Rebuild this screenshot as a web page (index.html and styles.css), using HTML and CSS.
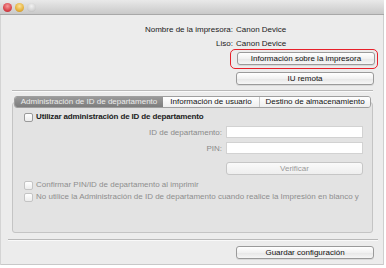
FILE: index.html
```html
<!DOCTYPE html>
<html lang="es">
<head>
  <meta charset="UTF-8">
  <title>Canon Device</title>
  <link rel="stylesheet" href="styles.css">
</head>
<body>
  <div class="window">
    <div class="titlebar">
      <span class="light light-red"></span>
      <span class="light light-yellow"></span>
      <span class="light light-gray"></span>
    </div>

    <div class="content">
      <div class="info">
        <span class="info-label">Nombre de la impresora:</span>
        <span class="info-value">Canon Device</span>
        <span class="info-label">Liso:</span>
        <span class="info-value">Canon Device</span>
      </div>

      <div class="top-buttons">
        <div class="highlight">
          <button class="btn">Información sobre la impresora</button>
        </div>
        <button class="btn btn-remote">IU remota</button>
      </div>

      <div class="separator"></div>

      <div class="tabbox">
        <div class="tabs">
          <span class="tab tab-active">Administración de ID de departamento</span>
          <span class="tab tab-mid">Información de usuario</span>
          <span class="tab tab-last">Destino de almacenamiento</span>
        </div>
        <div class="panel">
          <label class="check check-main"><span class="box"></span>Utilizar administración de ID de departamento</label>

          <div class="fields">
            <span class="field-label">ID de departamento:</span>
            <span class="input"></span>
            <span class="field-label">PIN:</span>
            <span class="input"></span>
            <span></span>
            <button class="btn btn-disabled">Verificar</button>
          </div>

          <label class="check check-off"><span class="box"></span>Confirmar PIN/ID de departamento al imprimir</label>
          <label class="check check-off"><span class="box"></span>No utilice la Administración de ID de departamento cuando realice la Impresión en blanco y</label>
        </div>
      </div>

      <div class="separator separator-bottom"></div>

      <div class="footer">
        <button class="btn">Guardar configuración</button>
      </div>
    </div>
  </div>
</body>
</html>
```

FILE: styles.css
```css
body {
  margin: 0;
  background: #fff;
  font-family: "Liberation Sans", Arial, sans-serif;
  font-size: 8px;
  color: #1a1a1a;
}

.window {
  width: 384px;
  height: 265px;
  background: #ececec;
  box-shadow: inset 1px 0 0 #d4d4d4, inset -1px 0 0 #cfcfcf, inset 0 -1px 0 #c8c8c8;
}

.titlebar {
  height: 14px;
  display: flex;
  align-items: center;
  gap: 3px;
  padding-left: 3px;
  background: linear-gradient(#e9e9e9, #c9c9c9);
  border-bottom: 1px solid #a8a8a8;
}

.light {
  width: 9px;
  height: 9px;
  border-radius: 50%;
}

.light-red {
  background: radial-gradient(circle at 50% 35%, #f59a9a, #d8434a 60%, #a92a30);
}

.light-yellow {
  background: radial-gradient(circle at 50% 35%, #fbe39a, #e5b03a 60%, #b9862a);
}

.light-gray {
  background: radial-gradient(circle at 50% 35%, #f2f2f2, #d2d2d2 60%, #adadad);
}

.content {
  padding: 8px 0 0 0;
}

.info {
  display: grid;
  grid-template-columns: 233px 1fr;
  column-gap: 3px;
  line-height: 14px;
}

.info-label {
  text-align: right;
}

.btn {
  display: block;
  height: 13px;
  padding: 0;
  font-family: inherit;
  font-size: 8px;
  color: #111;
  white-space: nowrap;
  border: 1px solid #9a9a9a;
  border-radius: 3px;
  background: linear-gradient(#ffffff, #f1f1f1 50%, #e6e6e6 51%, #f6f6f6);
  box-shadow: 0 1px 0 rgba(0, 0, 0, 0.08);
}

.top-buttons {
  display: flex;
  flex-direction: column;
  align-items: flex-end;
  padding-right: 10px;
  margin-top: -2px;
}

.top-buttons .btn {
  width: 138px;
}

.highlight {
  padding: 2px 2px 3px 6px;
  border: 1.5px solid #e8202a;
  border-radius: 5px;
  margin-right: -4px;
}

.btn-remote {
  margin-top: 3px;
}

.separator {
  height: 0;
  border-top: 1px solid #b9b9b9;
  border-bottom: 1px solid #f9f9f9;
  margin: 5px 11px 0 12px;
}

.tabbox {
  margin: 4px 11px 0 12px;
}

.tabs {
  display: flex;
  width: 357px;
  height: 12px;
  box-sizing: border-box;
  margin: 0 0 -6px 2px;
  position: relative;
  z-index: 1;
  border: 1px solid #9f9f9f;
  border-radius: 3px;
  overflow: hidden;
  white-space: nowrap;
}

.tab {
  line-height: 10px;
  text-align: center;
  background: linear-gradient(#ffffff, #eeeeee);
  color: #111;
}

.tab-active {
  width: 148px;
  background: linear-gradient(#9a9a9a, #7d7d7d);
  color: #ececec;
}

.tab-mid {
  width: 96px;
  border-right: 1px solid #c8c8c8;
}

.tab-last {
  flex: 1;
}

.panel {
  height: 131px;
  padding-top: 8px;
  box-sizing: border-box;
  background: #e3e3e3;
  border: 1px solid #c4c4c4;
  border-radius: 3px;
}

.check {
  display: flex;
  align-items: center;
  gap: 3px;
  padding-left: 11px;
  line-height: 12px;
  white-space: nowrap;
}

.check-main {
  font-weight: bold;
  color: #1c1c1c;
  letter-spacing: -0.15px;
}

.box {
  width: 7px;
  height: 7px;
  flex: none;
  border: 1px solid #9a9a9a;
  border-radius: 2px;
  background: linear-gradient(#ffffff, #ececec);
}

.check-off {
  color: #8e8e8e;
}

.check-off .box {
  border-color: #c4c4c4;
}

.fields {
  display: grid;
  grid-template-columns: 209px 137px;
  grid-template-rows: 12px 12px 12px;
  column-gap: 4px;
  row-gap: 4px;
  align-items: center;
  margin: 3px 0 9px 0;
  color: #8a8a8a;
}

.field-label {
  text-align: right;
}

.input {
  height: 12px;
  background: #fff;
  border: 1px solid #d2d2d2;
  box-sizing: border-box;
}

.btn-disabled {
  width: 137px;
  color: #9a9a9a;
  border-color: #c6c6c6;
  background: linear-gradient(#fafafa, #eeeeee);
  box-shadow: none;
  margin-top: 8px;
}

.separator-bottom {
  margin: 6px 6px 0 8px;
}

.footer {
  display: flex;
  justify-content: flex-end;
  padding: 5px 10px 0 0;
}

.footer .btn {
  width: 138px;
}
```
